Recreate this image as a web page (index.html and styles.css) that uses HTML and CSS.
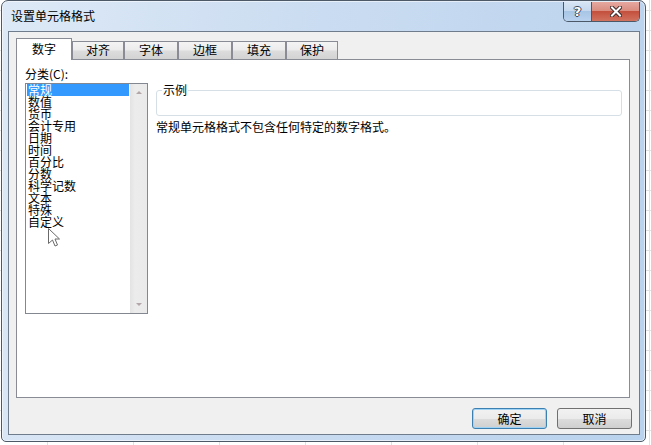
FILE: index.html
```html
<!DOCTYPE html>
<html lang="zh-CN">

<head>
    <meta charset="UTF-8">
    <title>设置单元格格式</title>
    <link rel="stylesheet" href="styles.css">
</head>

<body>
    <div class="window">
        <div class="titlebar">
            <span class="title">设置单元格格式</span>
            <div class="caption-btns">
                <span class="cap-btn help">?</span>
                <span class="cap-btn close">
                    <svg width="12" height="11" viewBox="0 0 12 11">
                        <path d="M2 1.5 L10 9.5 M10 1.5 L2 9.5" stroke="#3b2a2a" stroke-width="4" stroke-linecap="square" />
                        <path d="M2 1.5 L10 9.5 M10 1.5 L2 9.5" stroke="#fff" stroke-width="2" stroke-linecap="square" />
                    </svg>
                </span>
            </div>
        </div>

        <div class="client">
            <div class="tabs">
                <div class="tab active">数字</div>
                <div class="tab narrow">对齐</div>
                <div class="tab">字体</div>
                <div class="tab">边框</div>
                <div class="tab">填充</div>
                <div class="tab narrow">保护</div>
            </div>

            <div class="tab-page">
                <div class="category">
                    <div class="field-label">分类(C):</div>
                    <div class="listbox">
                        <ul class="items">
                            <li class="selected">常规</li>
                            <li>数值</li>
                            <li>货币</li>
                            <li>会计专用</li>
                            <li>日期</li>
                            <li>时间</li>
                            <li>百分比</li>
                            <li>分数</li>
                            <li>科学记数</li>
                            <li>文本</li>
                            <li>特殊</li>
                            <li>自定义</li>
                        </ul>
                        <div class="scrollbar">
                            <span class="arrow up"></span>
                            <span class="arrow down"></span>
                        </div>
                        <svg class="cursor" width="13" height="20" viewBox="0 0 13 20">
                            <path d="M0.5 0.5 V15.5 L4.5 12 L7 18 L9.5 17 L7 11 H11.5 Z" fill="#fff" stroke="#6a6a6a" />
                        </svg>
                    </div>
                </div>

                <div class="preview">
                    <fieldset class="sample">
                        <legend>示例</legend>
                    </fieldset>
                    <p class="desc">常规单元格格式不包含任何特定的数字格式。</p>
                </div>
            </div>

            <div class="footer">
                <button class="btn default">确定</button>
                <button class="btn">取消</button>
            </div>
        </div>
    </div>
</body>

</html>
```

FILE: styles.css
```css
body {
    margin: 0;
    font-family: "Noto Sans CJK SC", "Liberation Sans", sans-serif;
    font-size: 12px;
    color: #000;
    background-color: #fff;
    background-image:
        linear-gradient(#dfe1e3 1px, transparent 1px),
        linear-gradient(90deg, #dfe1e3 1px, transparent 1px);
    background-size: 86px 20px;
    background-position: 47px 10px;
}

.window {
    box-sizing: border-box;
    width: 645px;
    height: 442px;
    margin-left: 1px;
    display: flex;
    flex-direction: column;
    border: 1px solid #4d5966;
    border-radius: 7px 7px 5px 5px;
    background: linear-gradient(100deg, #dde9f6 0%, #cadcf1 45%, #b9d2ed 100%);
    box-shadow: inset 0 0 0 1px rgba(255, 255, 255, 0.55);
}

.titlebar {
    height: 30px;
    display: flex;
    justify-content: space-between;
    align-items: center;
}

.title {
    padding-left: 9px;
    line-height: 14px;
}

.caption-btns {
    align-self: flex-start;
    margin-top: 1px;
    margin-right: 5px;
    display: flex;
    height: 19px;
    border: 1px solid #4a5868;
    border-top: none;
    border-radius: 0 0 5px 5px;
    overflow: hidden;
}

.cap-btn {
    display: flex;
    align-items: center;
    justify-content: center;
    height: 19px;
}

.cap-btn.help {
    width: 27px;
    border-right: 1px solid #4a5868;
    background: linear-gradient(#d7e5f4, #c3d7ee 50%, #a9c5e6 50%, #b8d2ee);
    font-family: "DejaVu Sans", sans-serif;
    font-weight: bold;
    font-size: 13px;
    color: #fff;
    text-shadow: 1px 0 #3b4a5c, -1px 0 #3b4a5c, 0 1px #3b4a5c, 0 -1px #3b4a5c;
}

.cap-btn.close {
    width: 47px;
    background: linear-gradient(#e5a89f, #d98a7e 50%, #c4503e 50%, #d0735f);
}

.client {
    flex: 1;
    margin: 0 5px 6px 6px;
    display: flex;
    flex-direction: column;
    border: 1px solid #6f7c8b;
    background-color: #f0f0f0;
}

.tabs {
    display: flex;
    align-items: flex-end;
    padding: 6px 0 0 7px;
}

.tab {
    box-sizing: border-box;
    width: 54px;
    height: 18px;
    border: 1px solid #898c95;
    border-bottom: none;
    background: linear-gradient(#f4f4f4, #ececec 45%, #dcdcdc 55%, #d3d3d3);
    text-align: center;
    line-height: 16px;
}

.tab.narrow {
    width: 52px;
}

.tab.active {
    position: relative;
    z-index: 1;
    width: 56px;
    height: 22px;
    margin-bottom: -1px;
    background: #fff;
    line-height: 20px;
}

.tab-page {
    box-sizing: border-box;
    height: 339px;
    margin: 0 9px 0 7px;
    padding: 7px 7px 0 8px;
    display: flex;
    border: 1px solid #898c95;
    background-color: #fff;
}

.category {
    width: 123px;
}

.field-label {
    height: 16px;
    line-height: 14px;
}

.listbox {
    position: relative;
    box-sizing: border-box;
    height: 231px;
    display: flex;
    border: 1px solid #828790;
    background-color: #fff;
}

.items {
    flex: 1;
    margin: 0;
    padding: 0 1px;
    list-style: none;
}

.items li {
    height: 12px;
    padding-left: 1px;
    line-height: 12px;
    white-space: nowrap;
}

.items li.selected {
    background-color: #3399ff;
    color: #fff;
}

.scrollbar {
    width: 17px;
    display: flex;
    flex-direction: column;
    justify-content: space-between;
    align-items: center;
    padding: 7px 0;
    background: linear-gradient(90deg, #e3e3e3, #ececec 30%, #eaeaea);
}

.arrow {
    width: 0;
    height: 0;
    border-left: 3px solid transparent;
    border-right: 3px solid transparent;
}

.arrow.up {
    border-bottom: 3px solid #b3a6a8;
}

.arrow.down {
    border-top: 3px solid #b3a6a8;
}

.cursor {
    position: absolute;
    left: 22px;
    top: 144px;
}

.preview {
    flex: 1;
    margin-left: 8px;
    padding-top: 16px;
}

.sample {
    margin: 0;
    padding: 0 0 18px 5px;
    min-width: 0;
    border: 1px solid #d5dfe5;
    border-radius: 3px;
}

.sample legend {
    padding: 0 1px;
    line-height: 14px;
}

.desc {
    margin: 4px 0 0;
    line-height: 14px;
}

.footer {
    display: flex;
    justify-content: flex-end;
    gap: 10px;
    padding: 10px 7px 0 0;
}

.btn {
    box-sizing: border-box;
    width: 75px;
    height: 21px;
    padding: 0;
    border: 1px solid #707070;
    border-radius: 3px;
    background: linear-gradient(#f2f2f2, #ebebeb 50%, #dddddd 50%, #cfcfcf);
    font-family: "Noto Sans CJK SC", sans-serif;
    font-size: 12px;
    line-height: 18px;
    color: #000;
}

.btn.default {
    border-color: #3c7fb1;
    box-shadow: inset 0 0 0 1px #9fd3f5;
}
```
